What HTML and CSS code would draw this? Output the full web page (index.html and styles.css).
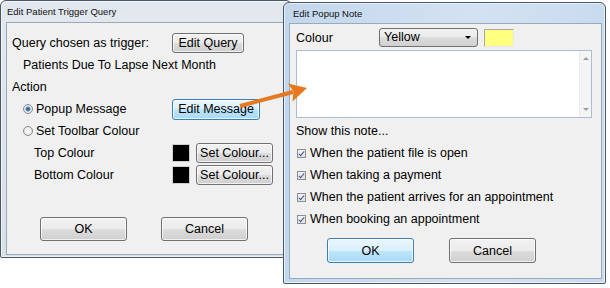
FILE: index.html
```html
<!DOCTYPE html>
<html lang="en">
<head>
    <meta charset="UTF-8">
    <title>Edit Patient Trigger Query</title>
    <link rel="stylesheet" href="styles.css">
</head>
<body>
<div class="desktop">

    <!-- Trigger dialog -->
    <div class="window trigger">
        <div class="titlebar">Edit Patient Trigger Query</div>
        <div class="client">
            <div class="row">
                <span class="label">Query chosen as trigger:</span>
                <button class="btn query-btn">Edit Query</button>
            </div>
            <div class="row indent">Patients Due To Lapse Next Month</div>
            <div class="row">Action</div>
            <div class="row">
                <span class="label indent"><span class="radio on"></span>Popup Message</span>
                <button class="btn default msg-btn">Edit Message</button>
            </div>
            <div class="row">
                <span class="label indent"><span class="radio"></span>Set Toolbar Colour</span>
            </div>
            <div class="row">
                <span class="label indent2">Top Colour</span>
                <span class="swatch black"></span>
                <button class="btn colour-btn">Set Colour...</button>
            </div>
            <div class="row">
                <span class="label indent2">Bottom Colour</span>
                <span class="swatch black"></span>
                <button class="btn colour-btn">Set Colour...</button>
            </div>
            <div class="buttons trigger-buttons">
                <button class="btn big">OK</button>
                <button class="btn big">Cancel</button>
            </div>
        </div>
    </div>

    <!-- Popup note dialog -->
    <div class="window popup">
        <div class="titlebar">Edit Popup Note</div>
        <div class="client">
            <div class="colour-row">
                <span class="colour-label">Colour</span>
                <div class="combo">Yellow<span class="combo-arrow"></span></div>
                <span class="swatch yellow"></span>
            </div>
            <div class="note">
                <div class="scrollbar">
                    <span class="scroll-up"></span>
                    <span class="scroll-down"></span>
                </div>
            </div>
            <div class="show-box">
                <div class="row">Show this note...</div>
                <div class="row"><span class="check"></span>When the patient file is open</div>
                <div class="row"><span class="check"></span>When taking a payment</div>
                <div class="row"><span class="check"></span>When the patient arrives for an appointment</div>
                <div class="row"><span class="check"></span>When booking an appointment</div>
            </div>
            <div class="buttons popup-buttons">
                <button class="btn default big">OK</button>
                <button class="btn big">Cancel</button>
            </div>
        </div>
    </div>

    <!-- Callout arrow -->
    <svg class="arrow" width="610" height="288" viewBox="0 0 610 288">
        <line x1="240" y1="106" x2="293" y2="92" stroke="#e8781f" stroke-width="4"/>
        <polygon points="307,88 288,83.5 293.5,91.8 292.5,101.5" fill="#e8781f"/>
    </svg>
</div>
</body>
</html>
```

FILE: styles.css
```css
/* Reset */
* {
    box-sizing: border-box;
}

body {
    margin: 0;
    background: #fff;
    font-family: 'Liberation Sans', Arial, sans-serif;
    font-size: 12.5px;
    color: #000;
}

.desktop {
    position: relative;
    width: 610px;
    height: 288px;
    overflow: hidden;
}

/* Windows (placed on the desktop) */
.window {
    position: absolute;
    display: flex;
    flex-direction: column;
    border: 1px solid #4a5666;
    border-radius: 6px 6px 2px 2px;
    box-shadow: inset 0 0 0 1px rgba(255, 255, 255, 0.6);
}

.trigger {
    left: 0;
    top: 0;
    width: 292px;
    height: 258px;
    background: linear-gradient(#e3e8ee, #d9e0e8);
}

.popup {
    left: 283px;
    top: 2px;
    width: 323px;
    height: 282px;
    background: linear-gradient(90deg, #c3d7ec, #d3e2f2 60%, #c8dbee);
    z-index: 2;
}

.titlebar {
    height: 21px;
    line-height: 22px;
    padding-left: 6px;
    font-size: 9.5px;
    color: #111;
}

.popup .titlebar {
    height: 20px;
    line-height: 21px;
    padding-left: 9px;
}

.client {
    flex: 1;
    background: #f0f0f0;
    border: 1px solid #9aaabd;
}

.trigger .client {
    margin: 0 6px 2px 5px;
    padding: 9px 0 0 5px;
}

.popup .client {
    margin: 0 3px 4px 5px;
    padding: 3px 0 0 6px;
}

/* Rows */
.row {
    display: flex;
    align-items: center;
    height: 22px;
    white-space: nowrap;
}

.label {
    display: flex;
    align-items: center;
    width: 160px;
}

.indent {
    padding-left: 11px;
}

.indent2 {
    padding-left: 22px;
}

/* Buttons */
.btn {
    font-family: inherit;
    font-size: 12.5px;
    color: #000;
    padding: 0;
    border: 1px solid #707070;
    border-radius: 3px;
    background: linear-gradient(#f2f2f2 0%, #ebebeb 50%, #dddddd 50%, #cfcfcf 100%);
    box-shadow: inset 0 0 0 1px rgba(255, 255, 255, 0.7);
}

.btn.default {
    border-color: #3c7fb1;
    background: linear-gradient(#eaf6fd 0%, #d9f0fc 50%, #bee6fd 50%, #a7d9f5 100%);
}

.query-btn {
    width: 72px;
    height: 20px;
}

.msg-btn {
    width: 88px;
    height: 21px;
}

.colour-btn {
    width: 77px;
    height: 20px;
    margin-left: 6px;
}

.big {
    width: 87px;
    height: 24px;
}

.buttons {
    display: flex;
}

.trigger-buttons {
    margin: 31px 0 0 28px;
    gap: 34px;
}

.popup-buttons {
    margin: 8px 0 0 31px;
    gap: 35px;
}

.popup-buttons .big {
    height: 25px;
}

/* Radio and check */
.radio {
    width: 10px;
    height: 10px;
    margin-right: 3px;
    border: 1px solid #8a8a8a;
    border-radius: 50%;
    background: radial-gradient(#fff, #dcdcdc);
}

.radio.on {
    background: radial-gradient(circle, #2a4f7f 0, #5d86b8 2px, #e8eef6 3px, #dcdcdc 5px);
}

.check {
    position: relative;
    width: 9px;
    height: 9px;
    margin: 0 4px 0 1px;
    border: 1px solid #8f8f8f;
    background: linear-gradient(#f4f4f4, #e0e0e0);
}

.check::after {
    content: "";
    position: absolute;
    left: 2px;
    top: 0;
    width: 2px;
    height: 5px;
    border: solid #3d5a96;
    border-width: 0 1.5px 1.5px 0;
    transform: rotate(40deg);
}

/* Colour swatches */
.swatch {
    display: inline-block;
    border: 1px solid #a0a0a0;
}

.swatch.black {
    width: 18px;
    height: 18px;
    background: #000;
    border-color: #d0d0d0;
}

.swatch.yellow {
    width: 30px;
    height: 18px;
    margin-left: 6px;
    background: #ffff80;
    border-color: #a8a8a8 #e8e8e8 #e8e8e8 #a8a8a8;
}

/* Popup note */
.colour-row {
    display: flex;
    align-items: center;
    height: 21px;
}

.colour-label {
    width: 83px;
}

.combo {
    position: relative;
    width: 99px;
    height: 19px;
    line-height: 17px;
    padding-left: 4px;
    border: 1px solid #707070;
    border-radius: 3px;
    background: linear-gradient(#f2f2f2 0%, #ebebeb 50%, #dddddd 50%, #cfcfcf 100%);
}

.combo-arrow {
    position: absolute;
    right: 6px;
    top: 7px;
    border-left: 3px solid transparent;
    border-right: 3px solid transparent;
    border-top: 3px solid #000;
}

.note {
    display: flex;
    justify-content: flex-end;
    width: 296px;
    height: 68px;
    margin-top: 2px;
    border: 1px solid #a9bdd4;
    background: #fff;
}

.scrollbar {
    display: flex;
    flex-direction: column;
    justify-content: space-between;
    align-items: center;
    width: 12px;
    padding: 6px 0;
    background: #f4f4f4;
    border-left: 1px solid #ececec;
}

.scroll-up,
.scroll-down {
    border-left: 3px solid transparent;
    border-right: 3px solid transparent;
}

.scroll-up {
    border-bottom: 3px solid #9a9a9a;
}

.scroll-down {
    border-top: 3px solid #9a9a9a;
}

.show-box {
    width: 296px;
    margin-top: 2px;
}

/* Arrow overlay */
.arrow {
    position: absolute;
    left: 0;
    top: 0;
    z-index: 3;
    pointer-events: none;
}
```
